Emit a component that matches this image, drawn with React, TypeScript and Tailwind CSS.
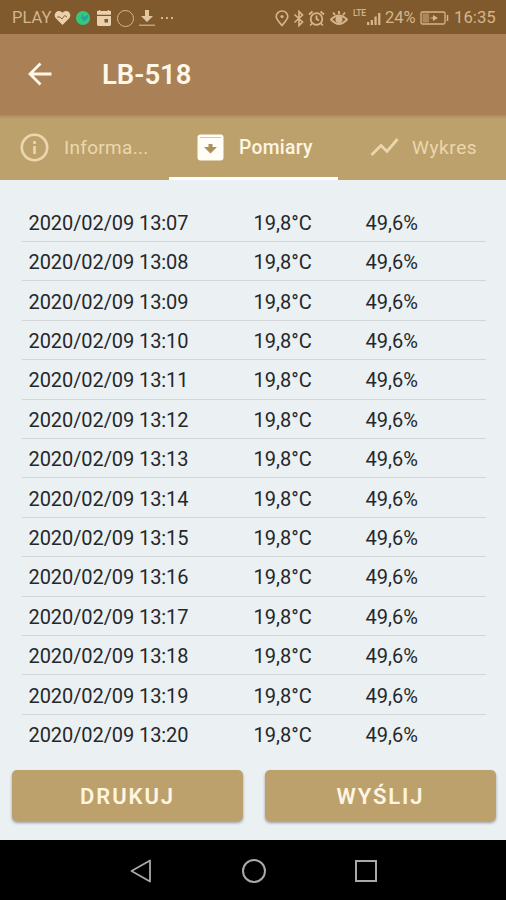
import React from 'react';
import clsx from 'clsx';

interface IconProps {
  className?: string;
}

const HeartIcon: React.FC<IconProps> = ({ className }) => (
  <svg className={className} viewBox="0 0 17 16" fill="none">
    <path d="M8.5 15 1.8 8.2C-1.5 4.2 3.2-1 7.4 1.8l1.1 1 1.1-1C13.8-1 18.5 4.2 15.2 8.2Z" fill="currentColor" />
    <path d="M3 7h3l2 2 2.7-3.5L13 7" stroke="#81592c" strokeWidth="0.9" />
  </svg>
);

const GlobeIcon: React.FC<IconProps> = ({ className }) => (
  <svg className={className} viewBox="0 0 16 16">
    <circle cx="8" cy="8" r="7" fill="#34c87f" />
    <path d="M7 3.5 9 7l4-2.5c1 3-1 6-4.5 6.5L6 8Z" fill="#28a3a0" />
  </svg>
);

const CalendarIcon: React.FC<IconProps> = ({ className }) => (
  <svg className={className} viewBox="0 0 16 17">
    <path d="M1 1h14v3.7H1zM1 6h14v8.6q0 1.4-1.4 1.4H2.4Q1 16 1 14.6z" fill="currentColor" />
    <path d="M8.5 9H12v3.5H8.5z" fill="#81592c" />
    <path d="M3.5 0v2M12.5 0v2" stroke="currentColor" strokeWidth="1.5" />
  </svg>
);

const DownloadIcon: React.FC<IconProps> = ({ className }) => (
  <svg className={className} viewBox="0 0 16 17">
    <path d="M6 0h4v6h4l-6 6-6-6h4z" fill="currentColor" />
    <path d="M0 14.5h16V16H0z" fill="currentColor" opacity=".65" />
  </svg>
);

const PinIcon: React.FC<IconProps> = ({ className }) => (
  <svg className={className} viewBox="0 0 14 17" fill="none" stroke="currentColor" strokeWidth="1.6">
    <path d="M7 15.5C4 11.8 1.2 9.2 1.2 6.5a5.8 5.5 0 0 1 11.6 0c0 2.7-2.8 5.3-5.8 9Z" />
    <circle cx="7" cy="6.5" r="1.6" fill="currentColor" stroke="none" />
  </svg>
);

const BluetoothIcon: React.FC<IconProps> = ({ className }) => (
  <svg className={className} viewBox="0 0 12 17" fill="none" stroke="currentColor" strokeWidth="1.7">
    <path d="m1.5 4.5 8 7.5L6 15.5v-14L9.5 5l-8 7.5" />
  </svg>
);

const AlarmIcon: React.FC<IconProps> = ({ className }) => (
  <svg className={className} viewBox="0 0 17 17" fill="none" stroke="currentColor" strokeWidth="1.8">
    <circle cx="8.5" cy="9" r="5.8" />
    <path d="M8.5 5.5V9l2.5 1.5M1 4.5l3.5-3M16 4.5l-3.5-3M4 13.5l-1.8 2M13 13.5l1.8 2" />
  </svg>
);

const EyeIcon: React.FC<IconProps> = ({ className }) => (
  <svg className={className} viewBox="0 0 18 16" fill="none" stroke="currentColor" strokeWidth="1.9">
    <path d="M1 9.5q8-8 16 0-8 9-16 0Z" />
    <circle cx="9" cy="9.5" r="2.6" fill="currentColor" />
    <path d="M9 4V1M5 5 3 2.5M13 5l2-2.5" />
  </svg>
);

const SignalIcon: React.FC<IconProps> = ({ className }) => (
  <svg className={className} viewBox="0 0 14 14" fill="currentColor">
    <path d="M0 10h2.3v3H0zM3.7 8H6v5H3.7zM7.4 4.5h2.3V13H7.4zM11.1 1h2.3v12h-2.3z" />
  </svg>
);

const BatteryIcon: React.FC<IconProps> = ({ className }) => (
  <svg className={className} viewBox="0 0 29 14" fill="none">
    <rect x="1" y="1" width="24" height="12" rx="1.5" stroke="currentColor" strokeWidth="1.3" />
    <path d="M2.5 2.5H9v9H2.5z" fill="currentColor" opacity=".5" />
    <path d="m9 7 4-.7V4l5 3-5 3V7.7z" fill="currentColor" />
    <path d="M27.5 4v6" stroke="currentColor" strokeWidth="1.5" />
  </svg>
);

const StatusBar: React.FC = () => (
  <div className="flex h-[34px] items-center bg-[#80592c] pt-0.5 pr-[9px] pl-3 text-[17px] text-[#d5b58d]">
    <span className="w-[42px] text-[16.5px] whitespace-nowrap">PLAY</span>
    <HeartIcon className="h-4 w-[17px] text-[#ead0ac]" />
    <GlobeIcon className="ml-1 size-4" />
    <CalendarIcon className="ml-[5px] h-[17px] w-4 text-[#ead0ac]" />
    <span className="ml-[5px] size-[17px] rounded-full border-[1.5px] border-current" />
    <DownloadIcon className="ml-[5px] h-[17px] w-4 text-[#e3c7a1]" />
    <span className="ml-[6px] flex gap-[3px]">
      <i className="size-[2px] bg-current" />
      <i className="size-[2px] bg-current" />
      <i className="size-[2px] bg-current" />
    </span>
    <div className="ml-auto flex items-center">
      <PinIcon className="h-[17px] w-3.5" />
      <BluetoothIcon className="ml-1 h-[17px] w-3" />
      <AlarmIcon className="ml-[3px] size-[17px]" />
      <EyeIcon className="ml-[5px] h-4 w-[18px]" />
      <span className="ml-[5px] w-[14px] -translate-y-[5px] text-[8.5px] leading-none font-medium tracking-tight">LTE</span>
      <SignalIcon className="mt-0.5 size-3.5" />
      <span className="ml-[4px] w-[35px] text-[16.5px] whitespace-nowrap">24%</span>
      <BatteryIcon className="h-3.5 w-[29px]" />
      <span className="ml-[5px] w-[43px] text-[16.8px] whitespace-nowrap">16:35</span>
    </div>
  </div>
);

const AppBar: React.FC = () => (
  <header className="flex h-[81px] items-center bg-[#aa8156] pl-7 text-[#fff7e7]">
    <svg className="-mt-0.5 size-6" viewBox="0 0 24 24" fill="none" stroke="currentColor" strokeWidth="2.8">
      <path d="M23.5 12h-21M12.5 1.5 2 12l10.5 10.5" />
    </svg>
    <h1 className="ml-[50px] text-[27.5px] font-semibold">LB-518</h1>
  </header>
);

interface TabProps {
  label: string;
  icon: React.ReactNode;
  active?: boolean;
  className?: string;
}

const Tab: React.FC<TabProps> = ({ label, icon, active = false, className }) => (
  <div
    className={clsx(
      'flex h-full items-center border-b-[3px] pt-0.5 whitespace-nowrap',
      active ? 'border-white font-medium text-[#fff6e0]' : 'border-transparent text-[#ebd7ad]',
      className
    )}
  >
    {icon}
    <span className="mt-0.5">{label}</span>
  </div>
);

const Tabs: React.FC = () => (
  <nav className="grid h-[65px] grid-cols-[169px_169px_168px] bg-linear-to-b from-[#ab8c59] to-[#bda16c] to-[4px]">
    <Tab
      label="Informa..."
      className="gap-[15px] pl-5 text-[19px] tracking-[0.3px]"
      icon={
        <svg className="size-[29px] shrink-0" viewBox="0 0 29 29" fill="none" stroke="currentColor" strokeWidth="2.6">
          <circle cx="14.5" cy="14.5" r="12.7" />
          <path d="M14.5 13v8M14.5 8v3" />
        </svg>
      }
    />
    <Tab
      label="Pomiary"
      active
      className="gap-[15px] pl-7 text-[19.3px] tracking-[0.3px]"
      icon={
        <svg className="size-[27px] shrink-0" viewBox="0 0 27 27">
          <rect x="0.5" y="0.5" width="26" height="26" rx="3" fill="#fffdf6" />
          <path d="M3 3.5h21" stroke="#d9c9a5" strokeWidth="1" />
          <path d="M11.5 10h4v3H20l-6.5 6.5L7 13h4.5z" fill="#ad9059" />
        </svg>
      }
    />
    <Tab
      label="Wykres"
      className="gap-[13px] pl-8 text-[19px] tracking-[0.6px]"
      icon={
        <svg className="h-[20px] w-[29px] shrink-0" viewBox="0 0 29 20" fill="none" stroke="currentColor" strokeWidth="2.8">
          <path d="m1.5 18 9.5-9.5 6 6L27.5 2" />
        </svg>
      }
    />
  </nav>
);

interface Measurement {
  time: string;
  temperature: string;
  humidity: string;
}

const measurements: Measurement[] = Array.from({ length: 14 }, (_, i) => ({
  time: `2020/02/09 13:${String(i + 7).padStart(2, '0')}`,
  temperature: '19,8°C',
  humidity: '49,6%',
}));

const MeasurementList: React.FC = () => (
  <div className="mr-5 ml-[22px] pt-[22.7px]">
    {measurements.map((m, i) => (
      <div
        key={m.time}
        className={clsx(
          'grid h-[39.4px] grid-cols-[225px_112px_1fr] items-center border-b pt-[2px] pl-[6.5px] text-[20px] text-[#24282b]',
          i < measurements.length - 1 ? 'border-[#d3d6d8]' : 'border-transparent'
        )}
      >
        <span className="tracking-[-0.08px]">{m.time}</span>
        <span>{m.temperature}</span>
        <span>{m.humidity}</span>
      </div>
    ))}
  </div>
);

const ActionButton: React.FC<{ label: string }> = ({ label }) => (
  <button
    type="button"
    className="h-[51px] rounded-[5px] bg-[#bda16c] pt-[2px] text-[22px] font-semibold tracking-[1.9px] text-[#fff5e1] shadow-[0_2px_3px_rgba(0,0,0,0.35)]"
  >
    {label}
  </button>
);

const NavigationBar: React.FC = () => (
  <footer className="flex h-[60px] items-center bg-black pl-[130px] text-[#a9a9a9]">
    <svg className="mt-px h-6 w-[22px]" viewBox="0 0 22 24" fill="none" stroke="currentColor" strokeWidth="1.8">
      <path d="M20 1.5v21L1.5 12Z" strokeLinejoin="round" />
    </svg>
    <span className="mt-px ml-[90px] size-[24px] rounded-full border-2 border-current" />
    <span className="mt-px ml-[89px] size-[22px] border-2 border-current" />
  </footer>
);

export default function App() {
  return (
    <div className="flex h-[900px] w-[506px] flex-col overflow-hidden bg-[#ebf0f3] font-['Roboto',sans-serif]">
      <StatusBar />
      <AppBar />
      <Tabs />
      <main className="flex-1">
        <MeasurementList />
        <div className="mt-[16px] grid grid-cols-2 gap-[22px] pr-2.5 pl-3">
          <ActionButton label="DRUKUJ" />
          <ActionButton label="WYŚLIJ" />
        </div>
      </main>
      <NavigationBar />
    </div>
  );
}
